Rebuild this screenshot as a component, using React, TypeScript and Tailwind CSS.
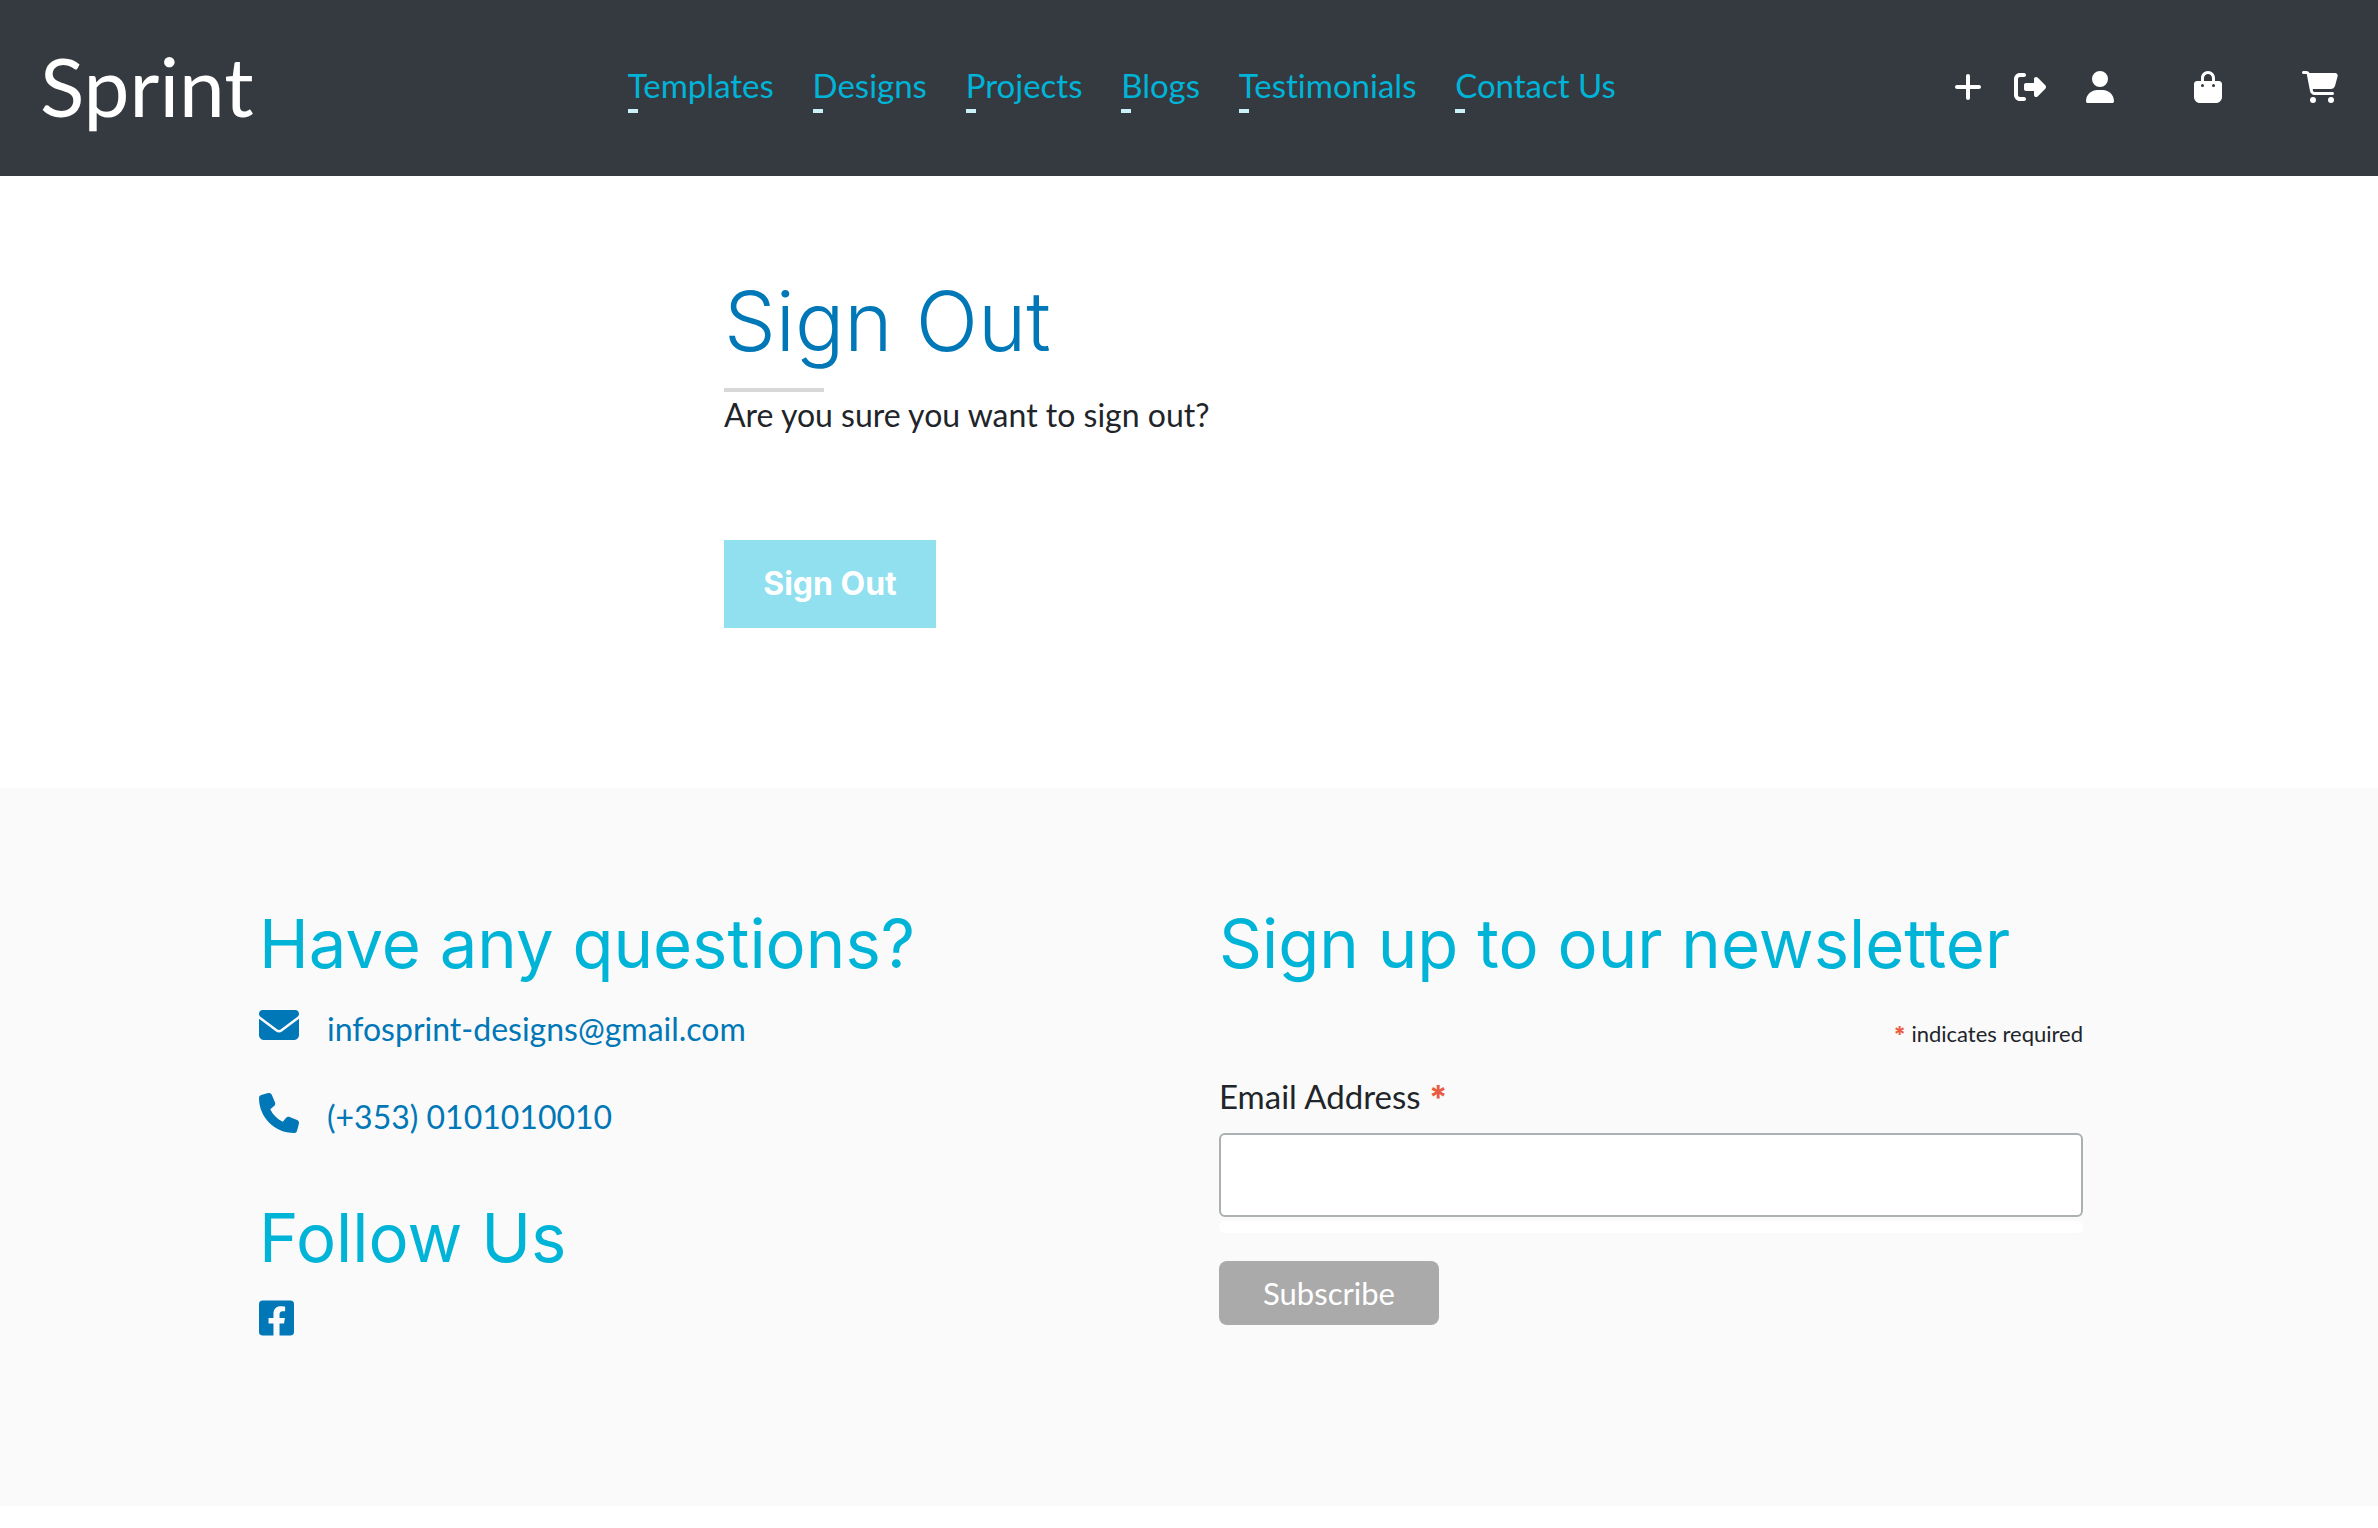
import React from 'react';
import { FaBagShopping, FaCartShopping, FaEnvelope, FaPhone, FaPlus, FaRightFromBracket, FaUser } from 'react-icons/fa6';
import { FaFacebookSquare } from 'react-icons/fa';

const navItems = ['Templates', 'Designs', 'Projects', 'Blogs', 'Testimonials', 'Contact Us'];

function Header() {
  return (
    <header className="flex h-44 items-center justify-between bg-[#343a40] px-10 pb-0.5 text-white">
      <a href="#home" className="mr-9 pb-1 text-[82px] leading-[120px]">Sprint</a>
      <nav className="flex w-[988px] justify-between">
        {navItems.map((item) => (
          <a key={item} href="#nav" className="flex flex-col gap-2 pt-2 text-[33px] leading-8 text-[#00b4d8]">
            {item}
            <span className="h-1 w-2.5 bg-[#caf0f8]" />
          </a>
        ))}
      </nav>
      <div className="flex items-center gap-20">
        <div className="flex items-center gap-10">
          <div className="flex items-center gap-8">
            <a href="#add" aria-label="Add"><FaPlus className="h-8 w-7" /></a>
            <a href="#signout" aria-label="Sign out"><FaRightFromBracket className="size-8" /></a>
          </div>
          <a href="#profile" aria-label="Profile"><FaUser className="h-8 w-7" /></a>
        </div>
        <a href="#bag" aria-label="Bag"><FaBagShopping className="h-8 w-7" /></a>
        <a href="#cart" aria-label="Cart"><FaCartShopping className="h-8 w-9" /></a>
      </div>
    </header>
  );
}

function SectionTitle({ children }: { children: React.ReactNode }) {
  return (
    <h2 className="font-['Inter',sans-serif] text-[67px] leading-[80px] font-normal whitespace-nowrap text-[#00b4d8]">
      {children}
    </h2>
  );
}

function Asterisk() {
  return <span className="font-['Inter',sans-serif] font-bold text-[#e85c41]">*</span>;
}

function Newsletter() {
  return (
    <form className="pr-9" onSubmit={(e) => e.preventDefault()}>
      <SectionTitle>Sign up to our newsletter</SectionTitle>
      <p className="mt-8 text-right text-[22px] leading-9">
        <Asterisk /> indicates required
      </p>
      <label htmlFor="email" className="mt-5 block text-[33px] leading-[48px]">
        Email Address <Asterisk />
      </label>
      <input
        id="email"
        type="email"
        required
        className="mt-3 block h-[84px] w-full rounded-md border-2 border-[#abb0b2] bg-white px-4 outline-none"
      />
      <div className="mt-1 h-3 rounded-md bg-white" />
      <button type="submit" className="mt-7 block h-16 w-[220px] rounded-lg bg-[#aaaaaa] text-center text-[31px] text-white">
        Subscribe
      </button>
    </form>
  );
}

export default function App() {
  return (
    <div className="min-h-screen bg-white font-['Lato',sans-serif] text-[32px] text-[#212529] [font-variant-ligatures:none]">
      <Header />
      <main className="mx-auto max-w-[930px] pt-24 pb-40">
        <h1 className="font-['Inter',sans-serif] text-[82px] leading-[100px] font-light text-[#0077b6]">Sign Out</h1>
        <div className="mt-4 h-1 w-[100px] bg-[#d8d8d8]" />
        <p className="leading-[46px]">Are you sure you want to sign out?</p>
        <button
          type="button"
          className="mt-[102px] block h-[88px] w-[212px] bg-[#90e0ef] font-['Inter',sans-serif] text-[32px] font-bold text-white"
        >
          Sign Out
        </button>
      </main>
      <footer className="bg-[#fafafa] pt-[116px] pb-[168px]">
        <div className="mx-auto grid max-w-[1860px] grid-cols-2 gap-[60px]">
          <div>
            <SectionTitle>Have any questions?</SectionTitle>
            <div className="mt-[21px] flex flex-col gap-10 leading-[48px] text-[#0077b6]">
              <a href="mailto:infosprint-designs@gmail.com" className="flex items-start gap-7">
                <FaEnvelope className="size-10" />
                infosprint-designs@gmail.com
              </a>
              <a href="tel:+3530101010010" className="flex items-start gap-7">
                <FaPhone className="size-10" />
                (+353) 0101010010
              </a>
            </div>
            <div className="mt-[57px]">
              <SectionTitle>Follow Us</SectionTitle>
            </div>
            <a href="#facebook" aria-label="Facebook" className="mt-5 block w-fit text-[#0077b6]">
              <FaFacebookSquare className="h-10 w-[35px]" />
            </a>
          </div>
          <Newsletter />
        </div>
      </footer>
    </div>
  );
}
